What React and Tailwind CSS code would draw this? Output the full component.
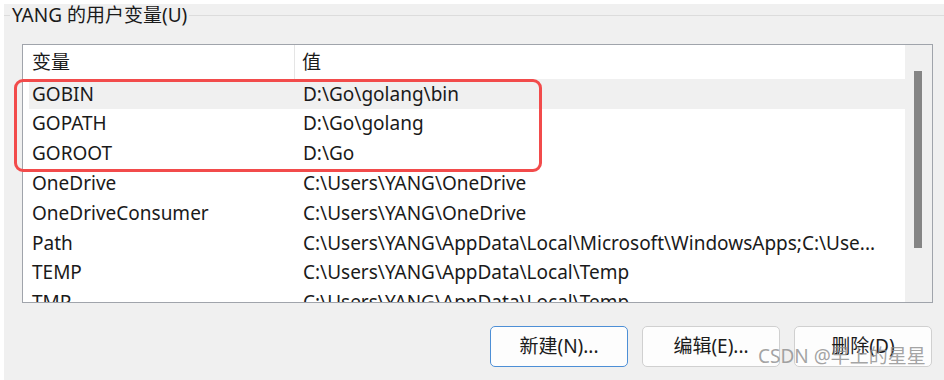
import React from 'react';

// Rows of the user variable table
const rows = [
  { name: 'GOBIN', value: 'D:\\Go\\golang\\bin', selected: true },
  { name: 'GOPATH', value: 'D:\\Go\\golang' },
  { name: 'GOROOT', value: 'D:\\Go' },
  { name: 'OneDrive', value: 'C:\\Users\\YANG\\OneDrive' },
  { name: 'OneDriveConsumer', value: 'C:\\Users\\YANG\\OneDrive' },
  { name: 'Path', value: 'C:\\Users\\YANG\\AppData\\Local\\Microsoft\\WindowsApps;C:\\Use...' },
  { name: 'TEMP', value: 'C:\\Users\\YANG\\AppData\\Local\\Temp' },
  { name: 'TMP', value: 'C:\\Users\\YANG\\AppData\\Local\\Temp' },
];

const font = { fontFamily: '"Noto Sans", "Noto Sans CJK SC", sans-serif' };

function Button({ children, focused }) {
  return (
    <button
      className={
        'w-[138px] h-[41px] rounded-[5px] bg-[#fdfdfd] text-[19px] text-[#1b1b1b] border ' +
        (focused ? 'border-[#4d8fd6]' : 'border-[#d0d0d0]')
      }
    >
      {children}
    </button>
  );
}

export default function App() {
  return (
    <div className="w-[944px] h-[380px] bg-white pt-[4px] pl-[4px] overflow-hidden" style={font}>
      <div className="relative h-[380px] bg-[#f0f0f0]">
        {/* group box title */}
        <div className="flex items-center h-[22px]">
          <div className="w-[6px] h-px bg-[#dcdcdc]" />
          <span className="px-[2px] text-[19px] leading-[22px] text-[#1a1a1a]">YANG 的用户变量(U)</span>
          <div className="flex-1 h-px bg-[#dcdcdc]" />
        </div>

        {/* list view */}
        <div className="ml-[18px] mt-[18px] w-[911px] h-[259px] border border-[#a0a4ab] bg-white flex overflow-hidden">
          <div className="flex-1 flex flex-col">
            <div className="flex h-[34px] shrink-0 items-center text-[19px] text-[#1a1a1a]">
              <div className="w-[272px] h-full pl-[9px] flex items-center border-r border-[#e5e5e5]">变量</div>
              <div className="pl-[7px]">值</div>
            </div>
            <div className="flex flex-col">
              {rows.map((r) => (
                <div
                  key={r.name}
                  className={
                    'ml-[6px] flex h-[29.8px] shrink-0 items-center text-[19px] text-[#1a1a1a] whitespace-nowrap ' +
                    (r.selected ? 'bg-[#f0f0f0]' : '')
                  }
                >
                  <div className="w-[266px] pl-[3px]">{r.name}</div>
                  <div className="pl-[8px]">{r.value}</div>
                </div>
              ))}
            </div>
          </div>
          {/* scrollbar */}
          <div className="w-[27px] shrink-0 bg-[#f0f0f0] pt-[26px] pl-[9px]">
            <div className="w-[8px] h-[177px] bg-[#858585]" />
          </div>
        </div>

        {/* buttons */}
        <div className="flex justify-end gap-[14px] w-[928px] mt-[23px]">
          <Button focused>新建(N)...</Button>
          <Button>编辑(E)...</Button>
          <Button>删除(D)</Button>
        </div>

        {/* red annotation */}
        <div className="absolute left-[10px] top-[75px] w-[528px] h-[93px] rounded-[9px] border-[3.5px] border-[#f24b4b]" />

        {/* watermark */}
        <div className="absolute left-[754px] top-[338px] text-[19px] text-[#8c8c8c]/80 whitespace-nowrap">
          CSDN @早上的星星
        </div>
      </div>
    </div>
  );
}
